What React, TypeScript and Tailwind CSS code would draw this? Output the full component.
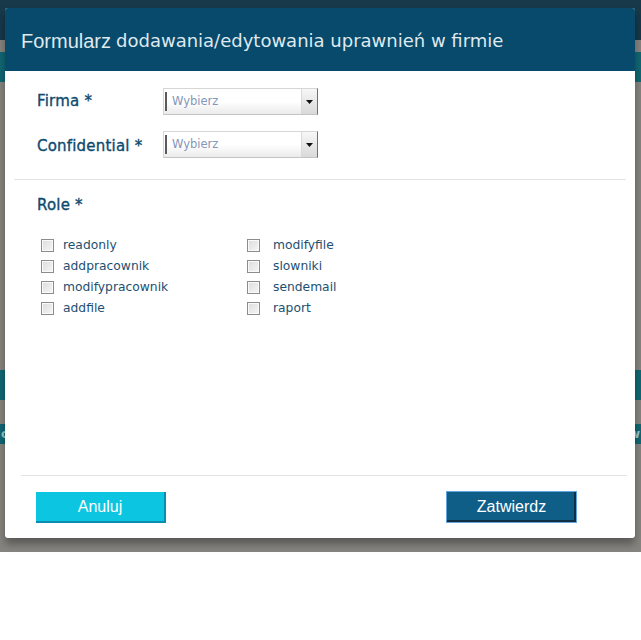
import React from "react";

const rolesLeft = ["readonly", "addpracownik", "modifypracownik", "addfile"];
const rolesRight = ["modifyfile", "slowniki", "sendemail", "raport"];

function Select() {
    return (
        <div className="flex h-[27px] w-[155px] border border-[#d6d6d6] border-r-[#707070] border-b-[#c4c4c4] bg-gradient-to-b from-white via-white to-[#ebebeb]">
            <span className="ml-px my-[3px] w-[2px] bg-[#5a5a5a]" />
            <span className="ml-[5px] flex items-center text-[11.5px] text-[#8596b8]">Wybierz</span>
            <div className="ml-auto flex w-[16px] items-center justify-center border-l border-[#dadada] bg-gradient-to-b from-[#f7f7f7] to-[#d9d9d9]">
                <svg width="7" height="4" viewBox="0 0 7 4">
                    <path d="M0 0h7L3.5 4z" fill="#111" />
                </svg>
            </div>
        </div>
    );
}

function Check({ label, gap }: { label: string; gap: string }) {
    return (
        <div className="flex h-[21px] items-center">
            <span className="h-[13px] w-[13px] shrink-0 border border-[#8c8c8c] bg-gradient-to-br from-[#dcdcdc] to-[#f6f6f6] shadow-[inset_0_0_0_1px_#fafafa]" />
            <span className={`${gap} text-[12.3px] text-[#1d4f72]`}>{label}</span>
        </div>
    );
}

const label = "text-[15px] text-[#0e4a6e] [-webkit-text-stroke:0.35px_#0e4a6e] tracking-[0.2px]";

export default function App() {
    return (
        <div className="relative h-[640px] w-[641px] overflow-hidden bg-white font-['DejaVu_Sans',sans-serif]">
            {/* page behind the overlay */}
            <div className="flex h-[552px] flex-col bg-[#878580]">
                <div className="h-[40px] bg-[#17394a]" />
                <div className="h-[12px]" />
                <div className="h-[30px] bg-[#106874]" />
                <div className="h-[288px]" />
                <div className="h-[30px] bg-[#106874]" />
                <div className="h-[24px]" />
                <div className="flex h-[20px] items-center justify-between bg-[#106874] px-[1px] text-[12px] font-bold text-[#9cc]">
                    <span>c</span>
                    <span>w</span>
                </div>
            </div>

            {/* modal */}
            <div className="absolute left-[5px] top-[8px] flex h-[530px] w-[630px] flex-col rounded-[3px] bg-white shadow-[0_6px_8px_rgba(0,0,0,0.35)]">
                <div className="flex h-[63px] items-center rounded-t-[3px] bg-[#084a6b] pl-[16px] pt-[2px] text-[#dfe9ef]">
                    <span className="font-['Liberation_Sans',sans-serif] text-[20px]">Formularz</span>
                    <span className="ml-[5px] text-[18px]">dodawania/edytowania uprawnień w firmie</span>
                </div>

                <div className="flex flex-col gap-[16px] pl-[32px] pt-[17px]">
                    <div className="flex items-center">
                        <span className={`w-[126px] ${label}`}>Firma *</span>
                        <Select />
                    </div>
                    <div className="flex items-center">
                        <span className={`w-[126px] pt-[3px] ${label}`}>Confidential *</span>
                        <Select />
                    </div>
                </div>

                <div className="mx-[9px] mt-[21px] h-px bg-[#e4e4e4]" />

                <div className={`pl-[32px] pt-[14px] ${label}`}>Role *</div>

                <div className="flex pl-[36px] pt-[18px]">
                    <div className="flex w-[206px] flex-col">
                        {rolesLeft.map(r => <Check key={r} label={r} gap="ml-[9px]" />)}
                    </div>
                    <div className="flex flex-col">
                        {rolesRight.map(r => <Check key={r} label={r} gap="ml-[13px]" />)}
                    </div>
                </div>

                <div className="mt-auto ml-[16px] mr-[8px] h-px bg-[#e4e4e4]" />

                <div className="flex items-start justify-between pl-[31px] pr-[58px] pt-[15px] pb-[15px] font-['Liberation_Sans',sans-serif] text-[16px] text-white">
                    <button className="mt-px h-[31px] w-[130px] border-r-2 border-b-2 border-[#0a8db0] bg-[#0cc6e1]">Anuluj</button>
                    <button className="h-[32px] w-[131px] border border-[#63a6de] bg-[#0f5e88] shadow-[inset_-2px_-2px_0_#123044]">Zatwierdz</button>
                </div>
            </div>
        </div>
    );
}
